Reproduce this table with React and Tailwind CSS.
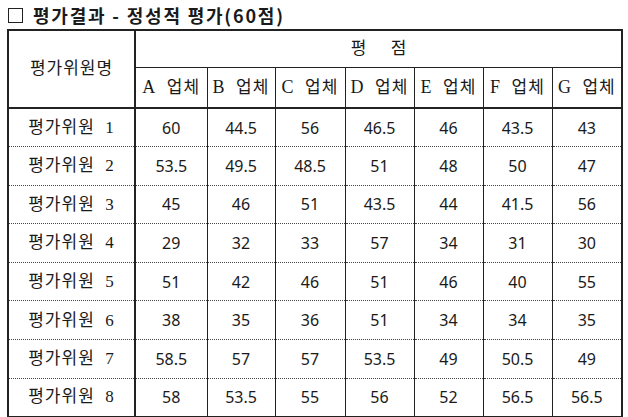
import React from 'react';

const vendors = ['A', 'B', 'C', 'D', 'E', 'F', 'G'];

// 평가위원별 점수
const scores = [
  ['60', '44.5', '56', '46.5', '46', '43.5', '43'],
  ['53.5', '49.5', '48.5', '51', '48', '50', '47'],
  ['45', '46', '51', '43.5', '44', '41.5', '56'],
  ['29', '32', '33', '57', '34', '31', '30'],
  ['51', '42', '46', '51', '46', '40', '55'],
  ['38', '35', '36', '51', '34', '34', '35'],
  ['58.5', '57', '57', '53.5', '49', '50.5', '49'],
  ['58', '53.5', '55', '56', '52', '56.5', '56.5'],
];

const serif = "font-['Liberation_Serif','Noto_Sans_CJK_KR',serif]";
const numFont = "font-['Noto_Sans','Noto_Sans_CJK_KR',sans-serif]";
const dotted = { borderBottomStyle: 'dotted' };

export default function App() {
  return (
    <div className="w-[628px] h-[417px] overflow-hidden bg-white text-[#1a1a1a]">
      {/* Title */}
      <div className="h-[29px] pl-[8px] pt-[2px] flex items-center gap-[10px]">
        <span className="inline-block w-[15px] h-[15px] border border-[#222]"></span>
        <span className="font-['Noto_Sans_CJK_KR',sans-serif] font-bold text-[18px] tracking-[1.8px]">
          평가결과 - 정성적 평가(60점)
        </span>
      </div>

      <table className="ml-[7px] w-[614px] table-fixed border-collapse border-2 border-[#222]">
        <colgroup>
          <col className="w-[127px]" />
          <col className="w-[72px]" />
          <col className="w-[68px]" />
          <col className="w-[70px]" />
          <col className="w-[69px]" />
          <col className="w-[69px]" />
          <col className="w-[69px]" />
          <col className="w-[70px]" />
        </colgroup>
        <thead>
          <tr className="h-[37px]">
            <th rowSpan={2} className={`border-r-2 border-b-2 border-[#222] font-normal text-[17px] tracking-[1px] ${serif}`}>
              평가위원명
            </th>
            <th colSpan={7} className={`border-b border-[#222] font-normal text-[17px] tracking-[10px] pl-[10px] ${serif}`}>
              평 점
            </th>
          </tr>
          <tr className="h-[41px]">
            {vendors.map((v, i) => (
              <th
                key={v}
                className={`border-b-2 border-[#222] font-normal text-[17px] tracking-[1px] whitespace-nowrap ${serif} ${i < 6 ? 'border-r' : ''}`}
              >
                <span className="text-[18px]">{v}</span>&nbsp;&nbsp;업체
              </th>
            ))}
          </tr>
        </thead>
        <tbody>
          {scores.map((row, r) => (
            <tr key={r} className="h-[38.6px]">
              <td
                className={`border-r-2 border-r-[#222] text-center text-[17px] tracking-[1px] ${serif} ${r < 7 ? 'border-b border-b-[#444]' : ''}`}
                style={r < 7 ? dotted : undefined}
              >
                평가위원&nbsp;&nbsp;{r + 1}
              </td>
              {row.map((s, c) => (
                <td
                  key={c}
                  className={`text-center text-[16px] ${numFont} ${c < 6 ? 'border-r border-r-[#222]' : ''} ${r < 7 ? 'border-b border-b-[#444]' : ''}`}
                  style={r < 7 ? dotted : undefined}
                >
                  {s}
                </td>
              ))}
            </tr>
          ))}
        </tbody>
      </table>
    </div>
  );
}
